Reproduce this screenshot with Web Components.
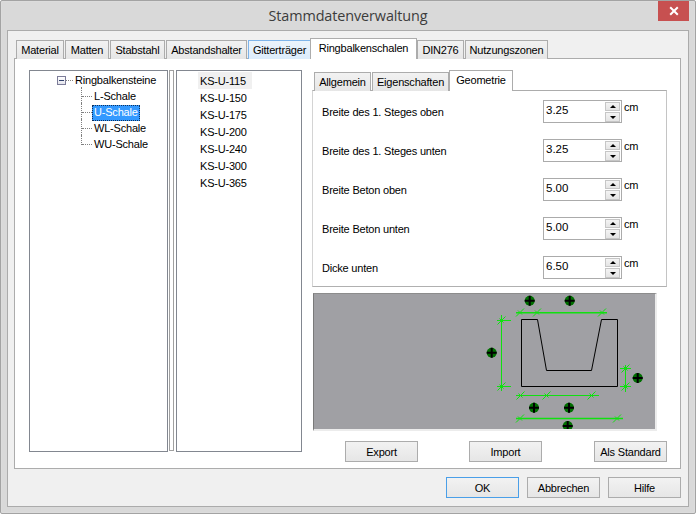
<!DOCTYPE html>
<html lang="de"><head><meta charset="utf-8"><title>Stammdatenverwaltung</title>
<style>
html,body{margin:0;padding:0;background:#fff}
body{font:11px "Liberation Sans",Arial,sans-serif;color:#000;letter-spacing:-.2px}
</style></head><body>
<x-dialog heading="Stammdatenverwaltung">
  <x-tabview>
    <x-tab slot="tab" style="width:48px">Material</x-tab>
    <x-tab slot="tab" style="width:44px">Matten</x-tab>
    <x-tab slot="tab" style="width:55px">Stabstahl</x-tab>
    <x-tab slot="tab" style="width:81px">Abstandshalter</x-tab>
    <x-tab slot="tab" hot style="width:63px">Gitterträger</x-tab>
    <x-tab slot="tab" active style="width:107px;margin-left:-2px;margin-right:-1px">Ringbalkenschalen</x-tab>
    <x-tab slot="tab" style="width:47px">DIN276</x-tab>
    <x-tab slot="tab" style="width:83px">Nutzungszonen</x-tab>
    <x-split>
      <x-tree>
        <x-node root>Ringbalkensteine</x-node>
        <x-node>L-Schale</x-node>
        <x-node selected>U-Schale</x-node>
        <x-node>WL-Schale</x-node>
        <x-node last>WU-Schale</x-node>
      </x-tree>
      <x-list>
        <x-item current>KS-U-115</x-item>
        <x-item>KS-U-150</x-item>
        <x-item>KS-U-175</x-item>
        <x-item>KS-U-200</x-item>
        <x-item>KS-U-240</x-item>
        <x-item>KS-U-300</x-item>
        <x-item>KS-U-365</x-item>
      </x-list>
      <x-detail>
        <x-subview>
          <x-tab slot="tab" style="width:57px">Allgemein</x-tab>
          <x-tab slot="tab" style="width:77px">Eigenschaften</x-tab>
          <x-tab slot="tab" active style="width:64px;margin-left:-1px">Geometrie</x-tab>
          <x-row label="Breite des 1. Steges oben">3.25</x-row>
          <x-row label="Breite des 1. Steges unten">3.25</x-row>
          <x-row label="Breite Beton oben">5.00</x-row>
          <x-row label="Breite Beton unten">5.00</x-row>
          <x-row label="Dicke unten">6.50</x-row>
        </x-subview>
        <x-geo></x-geo>
        <x-actions>
          <x-btn>Export</x-btn>
          <x-btn>Import</x-btn>
          <x-btn style="margin-left:1px">Als Standard</x-btn>
        </x-actions>
      </x-detail>
    </x-split>
  </x-tabview>
  <x-btn slot="footer" primary>OK</x-btn>
  <x-btn slot="footer">Abbrechen</x-btn>
  <x-btn slot="footer">Hilfe</x-btn>
</x-dialog>
<script>
function def(name, html, extra){
  const t=document.createElement('template'); t.innerHTML=html;
  customElements.define(name, class extends HTMLElement{
    constructor(){super();this.attachShadow({mode:'open'}).appendChild(t.content.cloneNode(true));}
    connectedCallback(){ if(extra) extra(this); }
  });
}
def('x-dialog',`<style>
:host{display:flex;flex-direction:column;box-sizing:border-box;width:696px;height:514px;background:#d9d9d9;border:1px solid #a3a3a3;border-radius:2px;padding:0 6px 6px;box-shadow:inset 0 0 0 1px #dcdcdc}
.bar{display:grid;grid-template-columns:1fr auto 1fr;height:29px;flex:none}
.t{grid-column:2;font:14.4px "Open Sans","Liberation Sans",sans-serif;color:#3c3c3c;padding-top:5px;line-height:20px;letter-spacing:-.1px}
.x{grid-column:3;justify-self:end;width:31px;height:20px;background:#c75050;display:flex;align-items:center;justify-content:center}
.client{flex:1;display:flex;flex-direction:column;background:#f0f0f0;border:1px solid #ababab;padding:7px 7px 8px 6px;min-height:0}
.foot{display:flex;justify-content:flex-end;gap:8px;margin-top:8px}
</style><div class="bar"><div class="t" id="t"></div><div class="x"><svg width="10" height="10" viewBox="0 0 10 10"><path d="M1.2 1.2L8.8 8.8M8.8 1.2L1.2 8.8" stroke="#fff" stroke-width="2"/></svg></div></div>
<div class="client"><slot></slot><div class="foot"><slot name="footer"></slot></div></div>`,
 el=>{el.shadowRoot.getElementById('t').textContent=el.getAttribute('heading');});

def('x-tabview',`<style>
:host{display:flex;flex-direction:column;flex:none;height:431px}
.strip{display:flex;align-items:flex-end;height:21px;padding-left:2px;gap:1px;margin-bottom:-1px;position:relative;z-index:1}
.panel{flex:1;background:#fff;border:1px solid #acacac;min-height:0;box-sizing:border-box}
</style><div class="strip"><slot name="tab"></slot></div><div class="panel"><slot></slot></div>`);
def('x-subview',`<style>
:host{display:flex;flex-direction:column;flex:none;height:217px}
.strip{display:flex;align-items:flex-end;height:21px;padding-left:2px;gap:1px;margin-bottom:-1px;position:relative;z-index:1}
.panel{flex:1;background:#fff;border:1px solid #d4d4d4;border-top-color:#acacac;border-right-color:#c4c4c4;border-bottom-color:#b0b0b0;box-sizing:border-box;padding:9px 0 0 9px;display:flex;flex-direction:column;gap:16px}
</style><div class="strip"><slot name="tab"></slot></div><div class="panel"><slot></slot></div>`);
def('x-tab',`<style>
:host{display:flex;box-sizing:border-box;height:19px;align-items:center;justify-content:center;background:linear-gradient(#f2f2f2,#e6e6e6);border:1px solid #acacac;border-bottom:none;padding-bottom:1px;white-space:nowrap;flex:none}
:host([active]){height:21px;background:#fff;padding-bottom:3px;position:relative;z-index:2}
:host([hot]){background:linear-gradient(#ecf4fc,#dcecfc);border-color:#7eb4ea}
</style><slot></slot>`);
def('x-split',`<style>
:host{display:flex;align-items:flex-start;padding:11px 0 0 14px}
</style><slot></slot>`);
def('x-tree',`<style>
:host{display:block;box-sizing:border-box;width:139px;height:382px;border:1px solid #828790;background:#fff;padding-top:2px;flex:none}
</style><slot></slot>`);
def('x-node',`<style>
:host{display:flex;height:16px;align-items:center;padding-left:51px;white-space:nowrap;position:relative}
.c{width:11px;height:16px;flex:none;position:relative}
.v{position:absolute;left:0;top:-2px;bottom:0;border-left:1px dotted #808080}
.h{position:absolute;left:1px;right:0;top:7px;border-top:1px dotted #808080}
.l{padding:0 2px;height:16px;line-height:15px;box-sizing:border-box}
:host([last]) .v{bottom:8px}
:host([selected]) .l{background:#3399ff;color:#fff;outline:1px dotted #10305a;outline-offset:-1px}
:host([root]){padding-left:27px}
:host([root]) .c{display:none}
.e{display:none;width:9px;height:9px;box-sizing:border-box;border:1px solid #7c7c98;background:linear-gradient(#fff,#e4e4ec);flex:none;position:relative;margin-top:-1px}
.e:after{content:"";position:absolute;left:1px;right:1px;top:3px;height:1px;background:#30406a}
.d{display:none;width:7px;border-top:1px dotted #808080;flex:none;margin-top:-1px}
:host([root]) .e,:host([root]) .d{display:block}
</style><span class="e"></span><span class="d"></span><span class="c"><span class="v"></span><span class="h"></span></span><span class="l"><slot></slot></span>`);
def('x-list',`<style>
:host{display:block;box-sizing:border-box;width:126px;height:382px;border:1px solid #828790;background:#fff;padding:1px 0 0 21px;flex:none;position:relative;margin-left:8px}
:host:before{content:"";position:absolute;left:-8px;top:-1px;width:5px;height:381px;box-sizing:border-box;border:1px solid #a0a0a0;background:#fff}
</style><slot></slot>`);
def('x-item',`<style>
:host{display:block;width:54px;height:17px;line-height:18px;padding-left:2px;box-sizing:border-box;white-space:nowrap}
:host([current]){background:#f0f0f0}
</style><slot></slot>`);
def('x-detail',`<style>
:host{display:flex;flex-direction:column;width:355px;margin-left:10px;flex:none}
</style><slot></slot>`);
def('x-row',`<style>
:host{display:flex;height:23px;flex:none}
.lab{width:221px;flex:none;line-height:24px;white-space:nowrap}
.spin{width:79px;height:23px;box-sizing:border-box;border:1px solid #ababab;display:flex;background:#fff;flex:none}
.val{flex:1;padding-left:2px;line-height:18px;letter-spacing:0;font-size:11.5px}
.btns{display:flex;flex-direction:column;gap:1px;padding:1px 1px 0 0}
.b{width:15px;height:9px;box-sizing:border-box;border:1px solid #c6c6c6;background:linear-gradient(#f4f4f4,#e4e4e4);display:flex;align-items:center;justify-content:center}
.b+.b{height:10px}
.u{width:0;height:0;border:3px solid transparent;border-top:none;border-bottom:3px solid #000}
.d{width:0;height:0;border:3px solid transparent;border-bottom:none;border-top:3px solid #000}
.cm{margin-left:2px;line-height:15px}
</style><span class="lab" id="l"></span><span class="spin"><span class="val"><slot></slot></span><span class="btns"><span class="b"><i class="u"></i></span><span class="b"><i class="d"></i></span></span></span><span class="cm">cm</span>`,
 el=>{el.shadowRoot.getElementById('l').textContent=el.getAttribute('label');});
function tick(x,y){return `<path d="M${x-4} ${y+4}L${x+4} ${y-4}M${x-2} ${y-2}L${x+2} ${y+2}"/>`;}
function handle(x,y){return `<circle cx="${x}" cy="${y}" r="5" fill="#006e00"/><path d="M${x-5} ${y}H${x+5}M${x} ${y-5}V${y+5}" stroke="#000" stroke-width="2"/>`;}
const dims=`<g stroke="#10e010" fill="none" stroke-width="1">
${tick(520,312.5)}${tick(537,312.5)}${tick(602,312.5)}
<path d="M501.5 315V391"/><path d="M497 320.5H511"/><path d="M497 386.5H511"/>${tick(501.5,320.5)}${tick(501.5,386.5)}
<path d="M625.5 365V392"/><path d="M620 368.5H631"/><path d="M620 386.5H631"/>${tick(625.5,368.5)}${tick(625.5,386.5)}
<path d="M516 395.5H599"/>${tick(520.5,395.5)}${tick(546.5,395.5)}${tick(591.5,395.5)}
${tick(520,418.5)}${tick(617,418.5)}
<path d="M516 312.7H607M516 418.4H623" stroke-width="1.5"/>
</g>`;
def('x-geo',`<style>
:host{display:block;box-sizing:border-box;width:344px;height:138px;margin:6px 0 0 1px;border-style:solid;border-width:1px 2px 2px 1px;border-color:#8c8c8c #ececec #ececec #7a7a7a;background:#a0a0a4;flex:none}
svg{display:block}
</style><svg width="341" height="135" viewBox="314 294 341 135">
<path d="M521.5 319.5H537.5L546.5 370.5H591.5L601.5 319.5H617.5V386.5H521.5Z" fill="none" stroke="#000" stroke-width="1"/>
${dims}
${handle(529.7,300.7)}${handle(569.7,300.7)}${handle(491.7,352.7)}${handle(637.7,378)}${handle(534,407.7)}${handle(569,407.7)}${handle(567.7,426)}
</svg>`);
def('x-actions',`<style>
:host{display:flex;gap:51px;padding:10px 0 0 33px}
</style><slot></slot>`);
def('x-btn',`<style>
:host{display:flex;box-sizing:border-box;width:73px;height:21px;align-items:center;justify-content:center;background:linear-gradient(#f2f2f2,#e6e6e6);border:1px solid #acacac;white-space:nowrap;flex:none}
:host([primary]){border-color:#4a9fe8}
</style><slot></slot>`);
</script>
</body></html>
